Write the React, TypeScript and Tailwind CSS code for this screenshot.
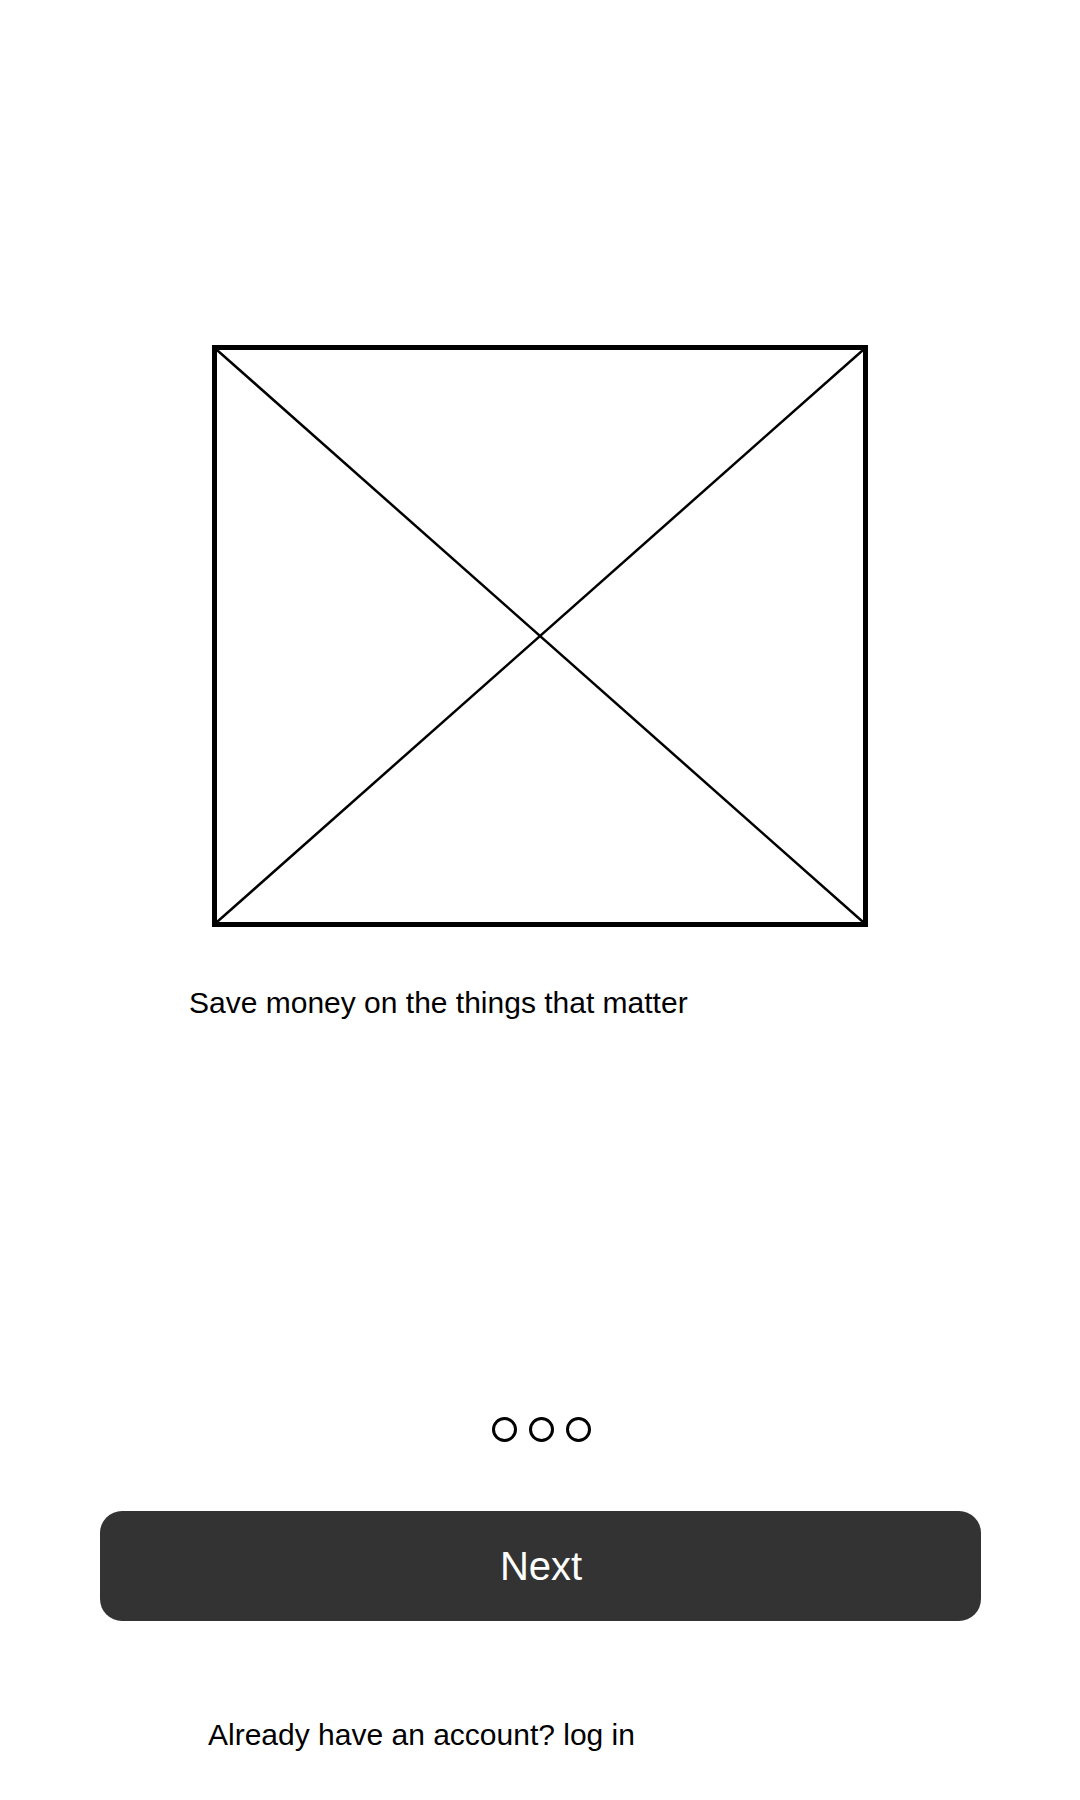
export default function App() {
  return (
    <div className="min-h-[1800px] w-[1080px] bg-white font-['Liberation_Sans',Arial,sans-serif] text-black">
      <div className="flex flex-col pt-[345px]">
        <div className="mx-auto h-[582px] w-[656px] border-[5px] border-black">
          <svg width="100%" height="100%" viewBox="0 0 646 572" preserveAspectRatio="none">
            <line x1="0" y1="0" x2="646" y2="572" stroke="black" strokeWidth="2.5" />
            <line x1="646" y1="0" x2="0" y2="572" stroke="black" strokeWidth="2.5" />
          </svg>
        </div>

        <p className="ml-[189px] mt-[59px] text-[30px] leading-[34px]">Save money on the things that matter</p>

        <div className="mt-[397px] flex justify-center gap-[12px] pl-[2px]">
          <span className="h-[25px] w-[25px] rounded-full border-[3px] border-black" />
          <span className="h-[25px] w-[25px] rounded-full border-[3px] border-black" />
          <span className="h-[25px] w-[25px] rounded-full border-[3px] border-black" />
        </div>

        <button
          type="button"
          className="mx-auto mt-[69px] flex h-[110px] w-[881px] items-center justify-center rounded-[22px] bg-[#333333] pl-[2px] text-[40px] text-white"
        >
          Next
        </button>

        <p className="ml-[208px] mt-[97px] text-[30px] leading-[34px]">Already have an account? log in</p>
      </div>
    </div>
  );
}
